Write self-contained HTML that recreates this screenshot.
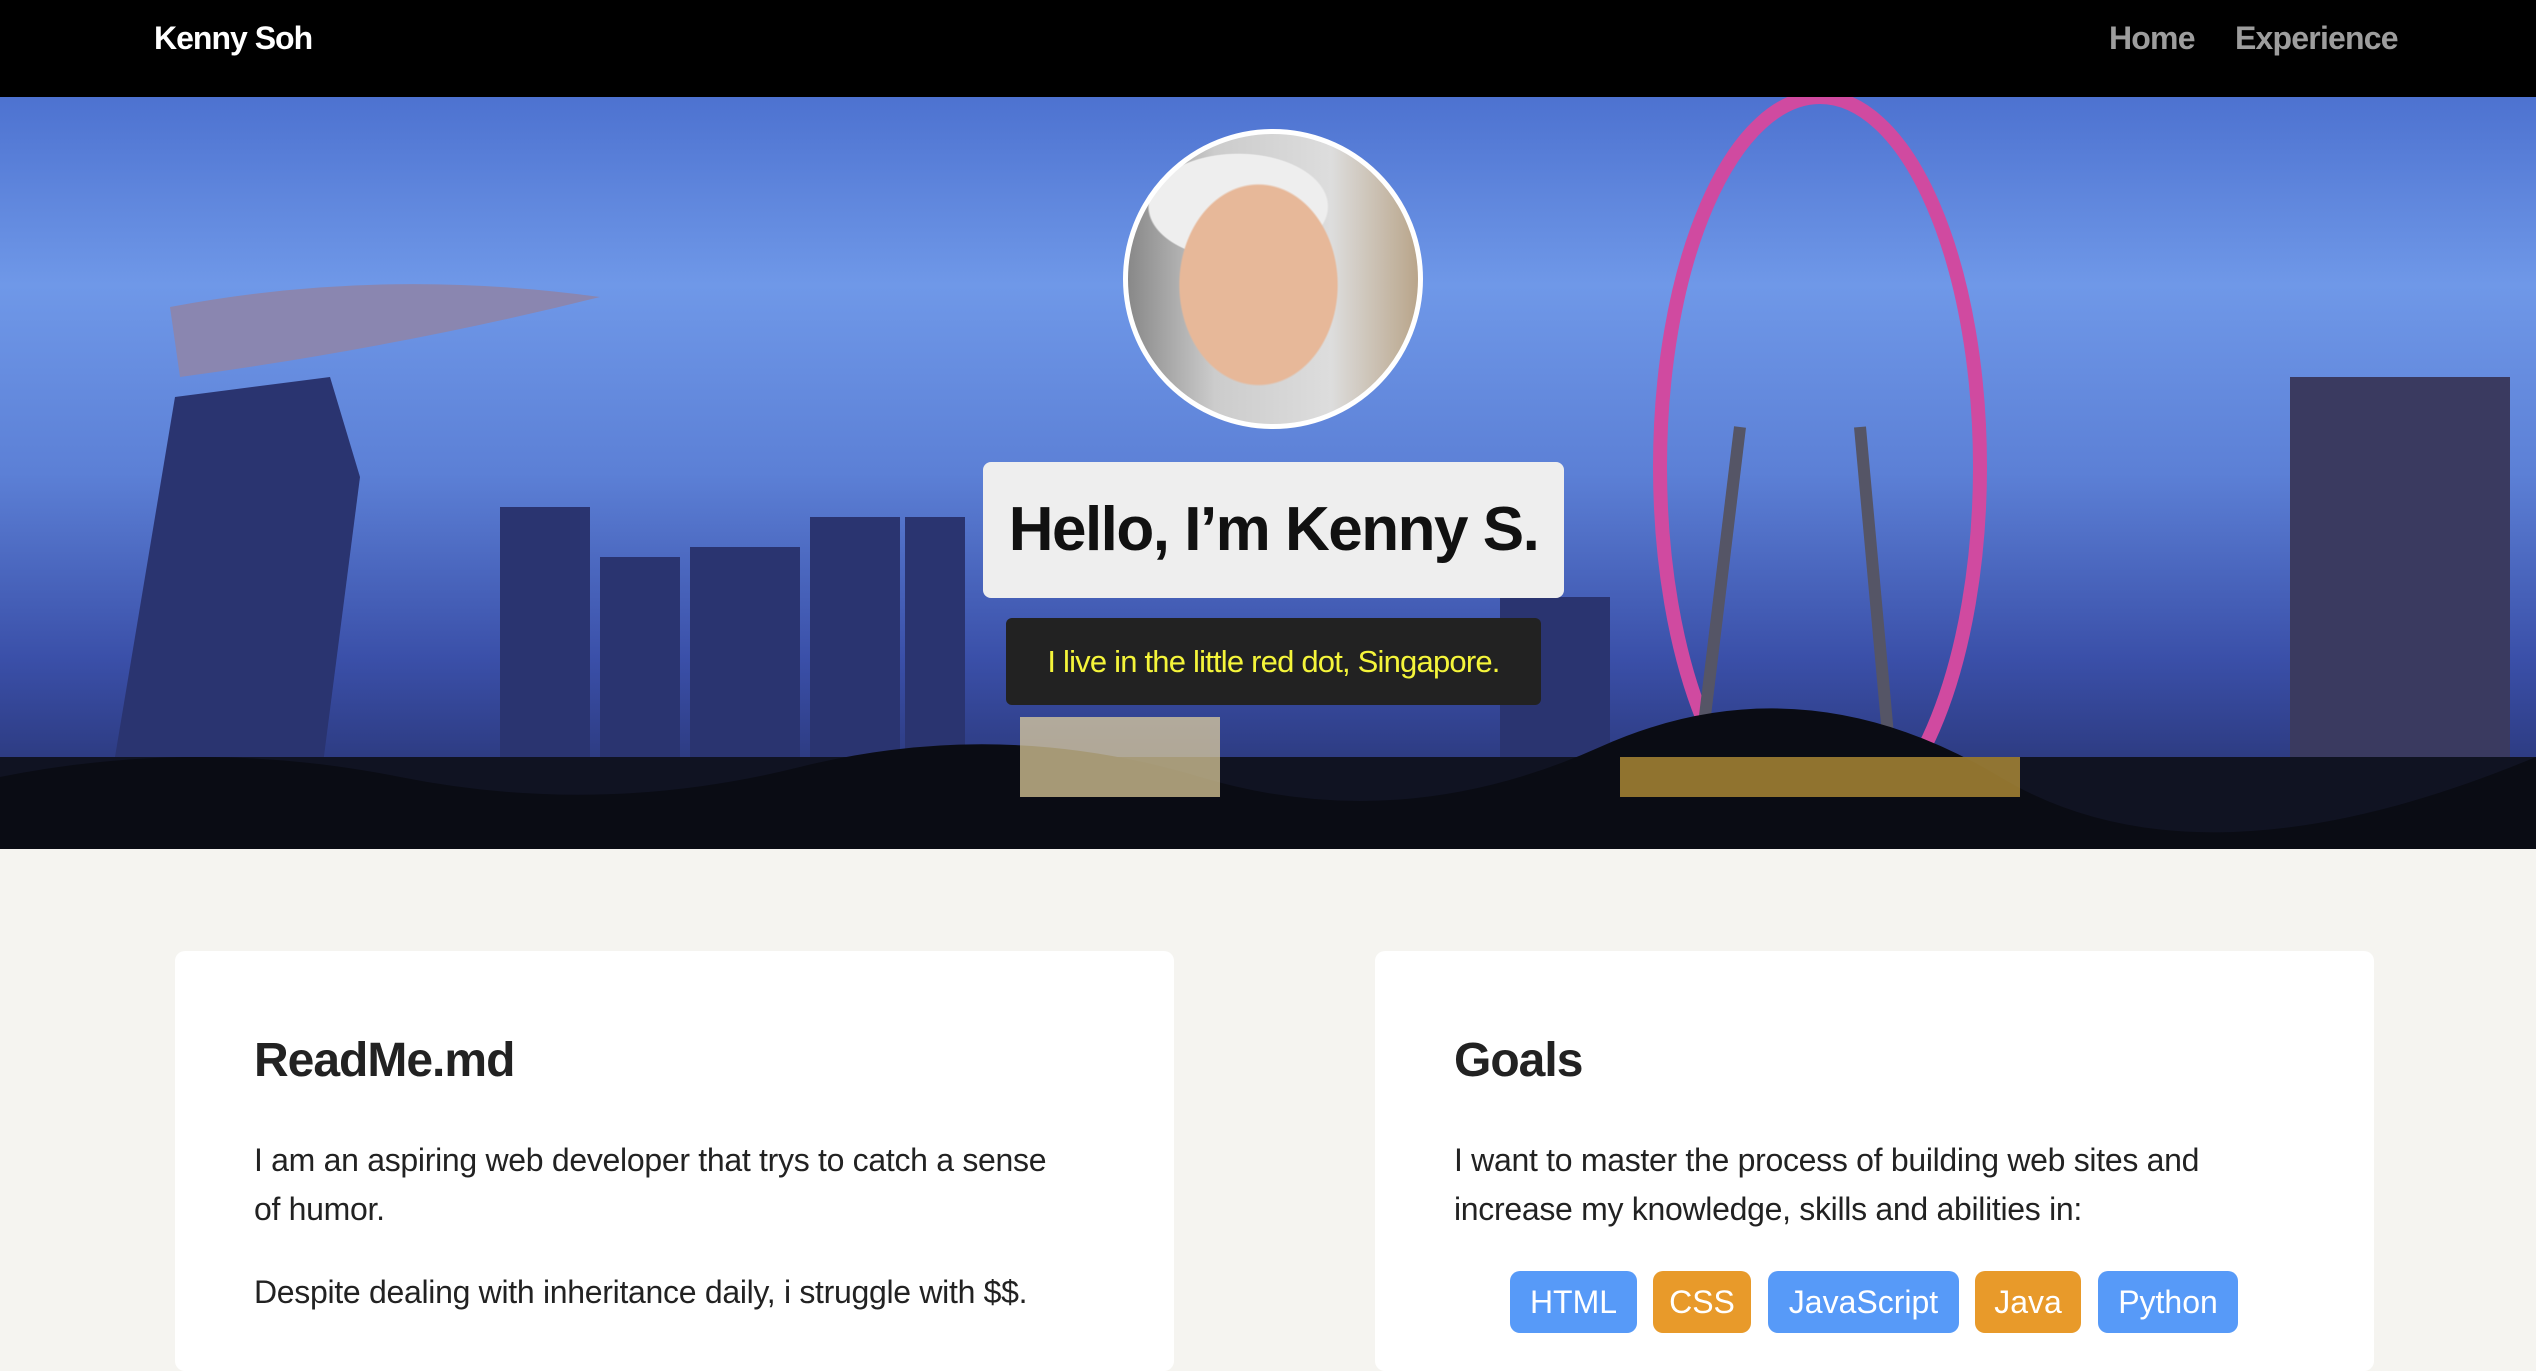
<!DOCTYPE html>
<html><head><meta charset="utf-8"><style>
*{margin:0;padding:0;box-sizing:border-box}
html,body{width:2536px;height:1350px;overflow:hidden;background:#f5f4f0;font-family:"Liberation Sans",sans-serif}
.nav{position:absolute;left:0;top:0;width:2536px;height:97px;background:#000}
.brand{position:absolute;left:154px;top:20px;color:#fff;font-size:32px;font-weight:bold;letter-spacing:-1px}
.nl{position:absolute;top:20px;color:#9d9d9d;font-size:32px;font-weight:bold;letter-spacing:-0.8px}
.hero{position:absolute;left:0;top:97px;width:2536px;height:752px;overflow:hidden;
background:linear-gradient(180deg,#4d72d0 0%,#6f98e8 25%,#5c80d6 50%,#3a4fa8 75%,#222a60 100%)}
.avatar{position:absolute;left:1123px;top:32px;width:300px;height:300px;border-radius:50%;border:5px solid #fff;
background:radial-gradient(ellipse 30% 38% at 45% 52%,#e7b899 0 90%,transparent 92%),radial-gradient(ellipse 34% 20% at 38% 25%,#eee 0 90%,transparent 92%),linear-gradient(90deg,#888 0,#ccc 30%,#ddd 70%,#b9a58a 100%);overflow:hidden}
.t1{position:absolute;left:983px;top:365px;width:581px;height:136px;background:#eee;border-radius:8px;text-align:center;line-height:136px;font-size:62px;font-weight:bold;color:#111;letter-spacing:-1.5px}
.t2{position:absolute;left:1006px;top:521px;width:535px;height:87px;background:#222;border-radius:6px;text-align:center;line-height:87px;font-size:31px;color:#f5f53a;letter-spacing:-0.8px}
.card{position:absolute;top:951px;width:999px;height:420px;background:#fff;border-radius:10px}
h2{position:absolute;left:79px;top:82px;font-size:48px;color:#222;letter-spacing:-1px}
.p{position:absolute;left:79px;font-size:32px;color:#222;line-height:49px;letter-spacing:-0.3px;white-space:nowrap}
.b{position:absolute;top:320px;height:62px;border-radius:10px;color:#fff;font-size:32px;text-align:center;line-height:62px}
.bl{background:#579af8}.or{background:#e89a2a}
</style></head><body>
<div class="nav"><div class="brand">Kenny Soh</div>
<div class="nl" style="left:2109px">Home</div><div class="nl" style="left:2235px">Experience</div></div>
<div class="hero">
<svg width="2536" height="752" style="position:absolute;left:0;top:0">
<g fill="#2a3470">
<polygon points="110,690 175,300 330,280 360,380 320,690"/>
<rect x="500" y="410" width="90" height="300"/><rect x="600" y="460" width="80" height="250"/>
<rect x="690" y="450" width="110" height="260"/><rect x="810" y="420" width="90" height="290"/>
<rect x="905" y="420" width="60" height="290"/><rect x="1500" y="500" width="110" height="210"/>
<rect x="2290" y="280" width="220" height="450" fill="#3a3a60"/>
</g>
<path d="M170,210 Q380,170 600,200 Q400,250 180,280 Z" fill="#8a86b0"/>
<ellipse cx="1820" cy="370" rx="160" ry="370" fill="none" stroke="#d04aa0" stroke-width="14"/>
<line x1="1740" y1="330" x2="1700" y2="660" stroke="#556" stroke-width="12"/>
<line x1="1860" y1="330" x2="1890" y2="660" stroke="#556" stroke-width="12"/>
<rect x="0" y="660" width="2536" height="92" fill="#101322"/>
<path d="M0,680 Q200,640 400,680 T800,670 T1200,680 T1600,650 T2000,680 T2536,660 V752 H0Z" fill="#0a0c14"/>
<rect x="1020" y="620" width="200" height="80" fill="#e8d6a0" opacity=".7"/>
<rect x="1620" y="660" width="400" height="40" fill="#c9a03a" opacity=".7"/>
</svg>
<div class="avatar"></div>
<div class="t1">Hello, I’m Kenny S.</div>
<div class="t2">I live in the little red dot, Singapore.</div>
</div>
<div class="card" style="left:175px"><h2>ReadMe.md</h2>
<div class="p" style="top:185px">I am an aspiring web developer that trys to catch a sense<br>of humor.</div>
<div class="p" style="top:317px">Despite dealing with inheritance daily, i struggle with $$.</div></div>
<div class="card" style="left:1375px"><h2>Goals</h2>
<div class="p" style="top:185px">I want to master the process of building web sites and<br>increase my knowledge, skills and abilities in:</div>
<div class="b bl" style="left:135px;width:127px">HTML</div>
<div class="b or" style="left:278px;width:98px">CSS</div>
<div class="b bl" style="left:393px;width:191px">JavaScript</div>
<div class="b or" style="left:600px;width:106px">Java</div>
<div class="b bl" style="left:723px;width:140px">Python</div>
</div>
</body></html>
